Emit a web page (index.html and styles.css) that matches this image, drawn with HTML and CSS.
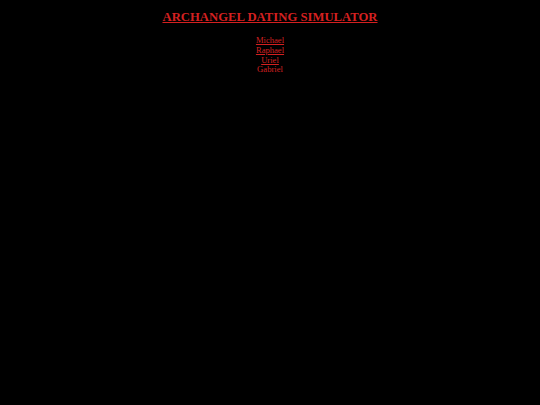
FILE: index.html
```html
<!DOCTYPE html>
<html>
<head>
<meta charset="utf-8">
<link rel="stylesheet" href="styles.css">
</head>
<body>
<h1 class="title"><a href="#">ARCHANGEL DATING SIMULATOR</a></h1>
<div class="menu">
<a href="#">Michael</a><br>
<a href="#">Raphael</a><br>
<a href="#">Uriel</a><br>
<span class="plain">Gabriel</span>
</div>
</body>
</html>
```
FILE: styles.css
```css
html, body { background: #000; }
body { margin: 8px; font-family: "Liberation Serif", serif; color: #d42020; }
.title { text-align: center; font-size: 12.7px; margin: 2px 0 11px; }
.title a { color: #d42020; }
.menu { text-align: center; font-size: 8.6px; line-height: 9.8px; }
.menu a { color: #d42020; }
.plain { color: #d42020; }
```
